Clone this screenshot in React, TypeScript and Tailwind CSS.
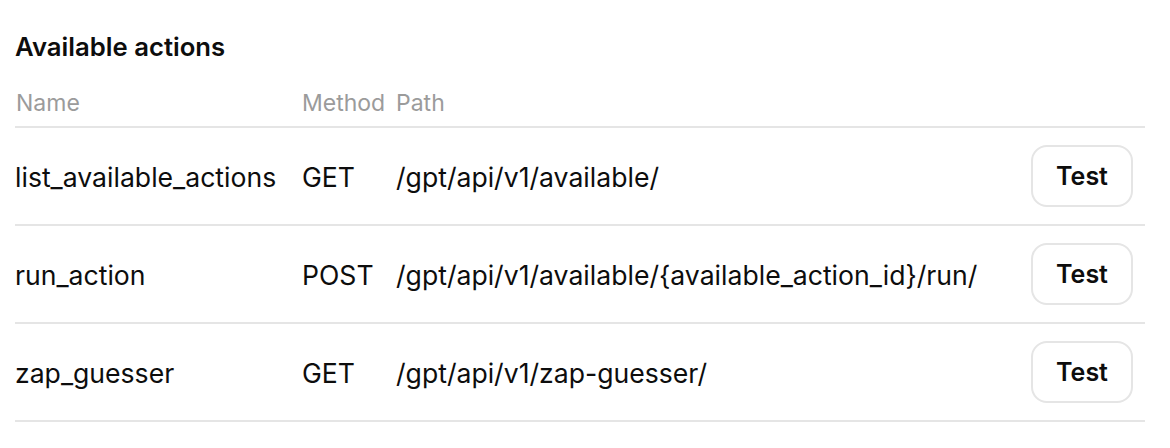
import React from "react";

const rows = [
  { name: "list_available_actions", method: "GET", path: "/gpt/api/v1/available/" },
  { name: "run_action", method: "POST", path: "/gpt/api/v1/available/{available_action_id}/run/" },
  { name: "zap_guesser", method: "GET", path: "/gpt/api/v1/zap-guesser/" },
];

export default function App() {
  return (
    <div
      className="w-[1170px] h-[448px] bg-white pl-[15px] pr-[25px] pt-[31px] text-[#0d0d0d]"
      style={{ fontFamily: 'Inter, "Liberation Sans", Arial, sans-serif' }}
    >
      <h2 className="text-[25.7px] leading-[32px] font-semibold">Available actions</h2>
      <div className="mt-[17px]">
        <div className="grid grid-cols-[287px_94px_1fr_auto] items-center h-[48px] border-b-2 border-[#e5e5e5] text-[23px] text-[#9b9b9b]">
          <div className="pl-[1px]">Name</div>
          <div>Method</div>
          <div>Path</div>
          <div />
        </div>
        {rows.map((r) => (
          <div
            key={r.name}
            className="grid grid-cols-[287px_94px_1fr_auto] items-center h-[98px] border-b-2 border-[#e5e5e5] text-[26.6px]"
          >
            <div className="pt-[3px]">{r.name}</div>
            <div className="pt-[3px]">{r.method}</div>
            <div className="pt-[3px]">{r.path}</div>
            <div className="pr-[12px]">
              <button className="w-[102px] h-[62px] rounded-[16px] border-2 border-[#e5e5e5] bg-white text-[25px] font-semibold flex items-center justify-center pt-[2px]">
                Test
              </button>
            </div>
          </div>
        ))}
      </div>
    </div>
  );
}
